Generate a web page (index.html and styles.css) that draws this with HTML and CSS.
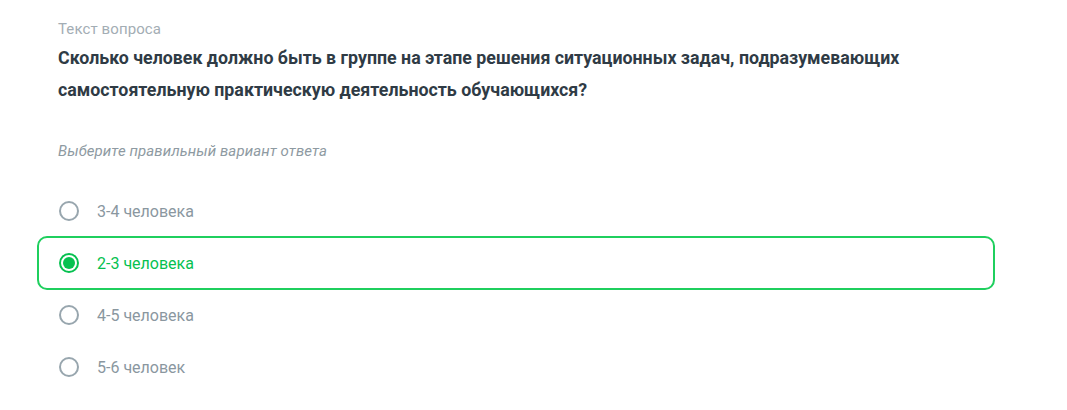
FILE: index.html
```html
<!DOCTYPE html>
<html lang="ru">
<head>
<meta charset="utf-8">
<link rel="stylesheet" href="styles.css">
</head>
<body>
<div class="question">
  <div class="label">Текст вопроса</div>
  <div class="title">Сколько человек должно быть в группе на этапе решения ситуационных задач, подразумевающих самостоятельную практическую деятельность обучающихся?</div>
  <div class="hint">Выберите правильный вариант ответа</div>
  <div class="options">
    <div class="option"><span class="radio"></span><span class="text">3-4 человека</span></div>
    <div class="option selected"><span class="radio"></span><span class="text">2-3 человека</span></div>
    <div class="option"><span class="radio"></span><span class="text">4-5 человека</span></div>
    <div class="option"><span class="radio"></span><span class="text">5-6 человек</span></div>
  </div>
</div>
</body>
</html>
```
FILE: styles.css
```css
html, body {
  margin: 0;
  padding: 0;
  background: #ffffff;
}
body {
  font-family: Roboto, "Liberation Sans", sans-serif;
}
.question {
  padding: 19px 0 0 58px;
  width: 937px;
}
.label {
  font-size: 15px;
  line-height: 20px;
  color: #a3adb4;
  letter-spacing: 0.1px;
}
.title {
  margin-top: 3px;
  font-size: 17.8px;
  line-height: 32px;
  font-weight: 700;
  color: #2f3b45;
  width: 900px;
}
.hint {
  margin-top: 35px;
  font-size: 15px;
  line-height: 20px;
  font-style: italic;
  color: #8e9aa2;
  letter-spacing: 0.1px;
}
.options {
  margin-top: 24px;
  margin-left: -21px;
  display: flex;
  flex-direction: column;
}
.option {
  box-sizing: border-box;
  height: 52px;
  display: flex;
  align-items: center;
  gap: 18px;
  padding-left: 20px;
  border: 2px solid transparent;
  border-radius: 10px;
  font-size: 16px;
  color: #8a979f;
}
.option.selected {
  border-color: #1fcf5e;
  color: #06c150;
  height: 54px;
  margin: -1px 0;
}
.radio {
  box-sizing: border-box;
  width: 20px;
  height: 20px;
  border: 2px solid #98a6ae;
  border-radius: 50%;
  flex: none;
  position: relative;
}
.option.selected .radio {
  border-color: #06c150;
}
.option.selected .radio::after {
  content: "";
  position: absolute;
  left: 2px;
  top: 2px;
  width: 12px;
  height: 12px;
  border-radius: 50%;
  background: #06c150;
}
```
